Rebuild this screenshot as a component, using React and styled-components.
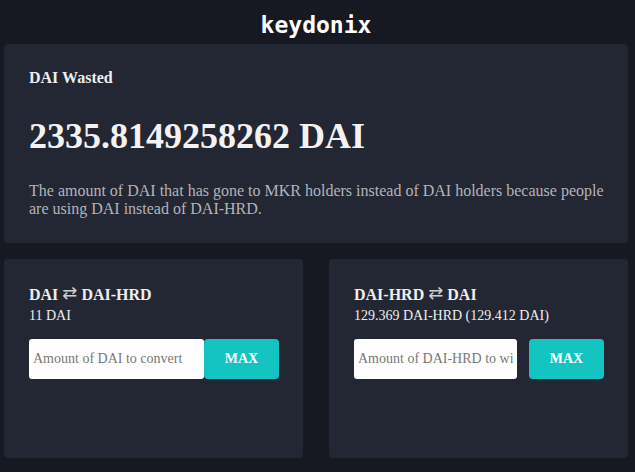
import React from 'react'
import styled, { createGlobalStyle } from 'styled-components'

const GlobalStyle = createGlobalStyle`
    html, body {
        margin: 0;
        padding: 0;
        background: #161922;
    }
    body {
        font-family: "Liberation Serif", "Times New Roman", serif;
        color: #eeeeee;
    }
`

const Page = styled.div`
    width: 624px;
    padding: 0 0 14px 4px;
`

const Header = styled.header`
    height: 44px;
    display: flex;
    justify-content: center;
    align-items: center;
    padding-top: 6px;
    box-sizing: border-box;

    h1 {
        margin: 0;
        font-family: "DejaVu Sans Mono", "Liberation Mono", monospace;
        font-size: 23px;
        font-weight: 700;
        color: #ffffff;
    }
`

const Card = styled.section`
    box-sizing: border-box;
    min-height: 199px;
    padding: ${p => p.$pad || '25px 14px 24px 25px'};
    background: #232633;
    border-radius: 4px;
`

const Label = styled.h3`
    margin: 0;
    font-size: 16px;
    line-height: 18px;
    font-weight: 700;
`

const Amount = styled.h2`
    margin: 29px 0 0;
    font-size: 36px;
    line-height: 41px;
    font-weight: 700;
    color: #f2f2f2;
`

const Description = styled.p`
    margin: 25px 0 0;
    font-size: 16px;
    line-height: 18px;
    color: #b4b4b8;
`

const Grid = styled.div`
    display: grid;
    grid-template-columns: 299px 299px;
    gap: 26px;
    margin-top: 16px;
`

const Title = styled.h3`
    display: flex;
    align-items: center;
    gap: 4px;
    margin: 0;
    font-size: 16px;
    line-height: 19px;
    font-weight: 700;

    span {
        font-family: "DejaVu Sans", sans-serif;
        font-weight: 400;
        font-size: 18px;
        color: #d0d0d4;
        position: relative;
        top: -2px;
    }
`

const Balance = styled.div`
    margin-top: 3px;
    font-size: 14px;
    line-height: 17px;
`

const Row = styled.form`
    display: flex;
    gap: ${p => p.$gap || 0}px;
    margin-top: 15px;
    width: 250px;

    input {
        box-sizing: border-box;
        flex: 1;
        min-width: 0;
        height: 40px;
        padding: 0 4px;
        border: none;
        border-radius: 3px;
        background: #ffffff;
        font-family: "Liberation Serif", "Times New Roman", serif;
        font-size: 14px;
        color: #333;
        outline: none;
    }
    input::placeholder {
        color: #777;
    }
    button {
        width: 75px;
        height: 40px;
        border: none;
        border-radius: 4px;
        background: #13c4c3;
        color: #fff;
        font-family: "Liberation Serif", "Times New Roman", serif;
        font-size: 14px;
        font-weight: 700;
        cursor: pointer;
    }
`

function Converter({ from, to, balance, placeholder, gap }) {
    return (
        <Card $pad="26px 25px">
            <Title>{from} <span>⇄</span> {to}</Title>
            <Balance>{balance}</Balance>
            <Row $gap={gap} onSubmit={e => e.preventDefault()}>
                <input type="text" placeholder={placeholder} />
                <button type="button">MAX</button>
            </Row>
        </Card>
    )
}

export default function App() {
    return (
        <>
            <GlobalStyle />
            <Page>
                <Header><h1>keydonix</h1></Header>
                <Card>
                    <Label>DAI Wasted</Label>
                    <Amount>2335.8149258262 DAI</Amount>
                    <Description>
                        The amount of DAI that has gone to MKR holders instead of DAI holders because people are using DAI instead of DAI-HRD.
                    </Description>
                </Card>
                <Grid>
                    <Converter from="DAI" to="DAI-HRD" balance="11 DAI" placeholder="Amount of DAI to convert" gap={0} />
                    <Converter from="DAI-HRD" to="DAI" balance="129.369 DAI-HRD (129.412 DAI)" placeholder="Amount of DAI-HRD to withdraw" gap={12} />
                </Grid>
            </Page>
        </>
    )
}
